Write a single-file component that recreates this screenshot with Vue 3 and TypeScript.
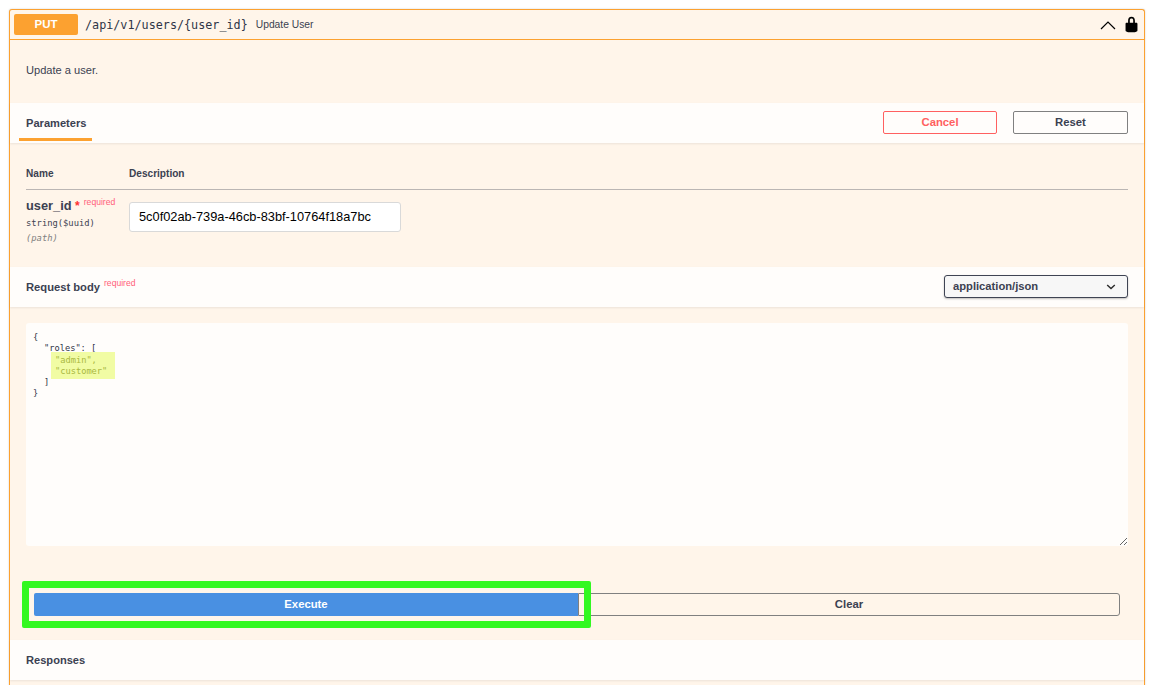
<script setup lang="ts">
const title: string = 'Update User'
</script>

<template>
  <div class="page">
    <section class="card">
      <header class="summary">
        <span class="method">PUT</span>
        <span class="path">/api/v1/users/{user_id}</span>
        <span class="title">{{ title }}</span>
        <svg class="arrow" width="16" height="10" viewBox="0 0 16 10"><polyline points="1,9 8,2 15,9" fill="none" stroke="#000" stroke-width="1.2" /></svg>
        <svg class="lock" width="17" height="17" viewBox="0 0 20 20"><path d="M15.8 8H14V5.6C14 2.703 12.665 1 10 1 7.334 1 6 2.703 6 5.6V8H4c-.553 0-1 .646-1 1.199V17c0 .549.428 1.139.951 1.307l1.197.387C5.672 18.861 6.55 19 7.1 19h5.8c.549 0 1.428-.139 1.951-.307l1.196-.387c.524-.167.953-.757.953-1.306V9.199C17 8.646 16.352 8 15.8 8zM12 8H8V5.199C8 3.754 8.797 3 10 3c1.203 0 2 .754 2 2.199V8z" /></svg>
      </header>

      <p class="description">Update a user.</p>

      <div class="band params-band">
        <div class="tab">Parameters</div>
        <div class="band-actions">
          <button class="btn cancel">Cancel</button>
          <button class="btn reset">Reset</button>
        </div>
      </div>

      <div class="params">
        <div class="params-head">
          <span class="col-name">Name</span>
          <span>Description</span>
        </div>
        <div class="param-row">
          <div class="col-name">
            <div class="param-name">user_id <span class="star">*</span><span class="req">required</span></div>
            <div class="param-type">string($uuid)</div>
            <div class="param-in">(path)</div>
          </div>
          <input class="param-input" value="5c0f02ab-739a-46cb-83bf-10764f18a7bc" />
        </div>
      </div>

      <div class="band body-band">
        <div class="body-title">Request body<span class="body-req">required</span></div>
        <div class="select">
          <span>application/json</span>
          <svg width="10" height="6" viewBox="0 0 10 6"><polyline points="1.2,1 5,4.6 8.8,1" fill="none" stroke="#2b2b2b" stroke-width="1.4" /></svg>
        </div>
      </div>

      <div class="editor-wrap">
        <div class="editor">
          <div class="ln">{</div>
          <div class="ln ind1">"roles": [</div>
          <div class="selected">
            <div class="ln">"admin",</div>
            <div class="ln">"customer"</div>
          </div>
          <div class="ln ind1">]</div>
          <div class="ln">}</div>
        </div>
      </div>

      <div class="execute-row">
        <div class="execute-slot">
          <button class="execute">Execute</button>
          <div class="highlight"></div>
        </div>
        <button class="clear">Clear</button>
      </div>

      <div class="band responses">Responses</div>
      <div class="rest"></div>
    </section>
  </div>
</template>

<style>
html, body { margin: 0; background: #fff; overflow: hidden; }
</style>

<style scoped>
.page {
  width: 1157px;
  height: 685px;
  overflow: hidden;
  padding: 9px 0 0 9px;
  box-sizing: border-box;
  font-family: "Liberation Sans", Arial, sans-serif;
  color: #3b4151;
}
.card {
  width: 1136px;
  box-sizing: border-box;
  border: 1px solid #fca130;
  border-bottom: 0;
  border-radius: 3px 3px 0 0;
  background: #fff5ea;
  box-shadow: 0 0 2px rgba(0, 0, 0, .2);
}
.summary {
  height: 30px;
  box-sizing: border-box;
  display: flex;
  align-items: center;
  padding: 0 4px;
  border-bottom: 1px solid #fca130;
}
.method {
  width: 64px;
  height: 21px;
  border-radius: 2px;
  background: #fca130;
  color: #fff;
  font-size: 11.5px;
  font-weight: 700;
  line-height: 21px;
  text-align: center;
}
.path {
  margin-left: 7px;
  font-family: "DejaVu Sans Mono", monospace;
  font-size: 11.75px;
  font-weight: 400;
  color: #2f3547;
}
.title { margin-left: 8px; font-size: 10.3px; }
.arrow { margin-left: auto; margin-right: 7px; }
.lock { margin-right: 0; }
.description {
  margin: 0;
  height: 63px;
  box-sizing: border-box;
  padding: 23px 16px 0;
  font-size: 11.1px;
  line-height: 14px;
}
.band {
  background: #fffdfb;
  box-shadow: 0 1px 2px rgba(0, 0, 0, .08);
  position: relative;
}
.params-band {
  height: 40px;
  display: flex;
  justify-content: space-between;
  padding: 0 16px 0 9px;
}
.tab {
  width: 73px;
  height: 38px;
  box-sizing: border-box;
  border-bottom: 3px solid #fca130;
  padding: 13px 0 0 7px;
  font-size: 11.1px;
  font-weight: 700;
  line-height: 14px;
}
.band-actions { display: flex; gap: 16px; padding-top: 8px; }
.btn {
  width: 114px;
  height: 23px;
  padding: 0 0 2px;
  box-sizing: border-box;
  border-radius: 2px;
  background: transparent;
  font: 700 11.3px "Liberation Sans", Arial, sans-serif;
  color: #3b4151;
}
.cancel { border: 1px solid #ff6060; color: #ff6060; }
.reset { width: 115px; border: 1px solid #808080; }
.params { height: 124px; padding: 0 16px; }
.params-head {
  height: 47px;
  box-sizing: border-box;
  display: flex;
  align-items: center;
  padding-top: 14px;
  border-bottom: 1px solid rgba(59, 65, 81, .35);
  font-size: 10.1px;
  font-weight: 700;
}
.col-name { width: 103px; flex: none; }
.param-row { display: flex; padding-top: 8px; }
.param-name { font-size: 12.8px; font-weight: 700; line-height: 16px; white-space: nowrap; }
.star { color: #ff3030; font-size: 12px; }
.req { color: #ff5f7a; font-size: 8.6px; position: relative; top: -5px; margin-left: 4px; font-weight: 400; }
.param-type { font-family: "DejaVu Sans Mono", monospace; font-size: 8.8px; font-weight: 400; line-height: 14px; margin-top: 1px; white-space: nowrap; }
.param-in { font-family: "DejaVu Sans Mono", monospace; font-size: 8.8px; font-style: italic; color: #808080; line-height: 14px; margin-top: 1px; }
.param-input {
  width: 272px;
  height: 30px;
  margin-top: 4px;
  box-sizing: border-box;
  padding: 0 9px 1px;
  border: 1px solid #d9d9d9;
  border-radius: 3px;
  background: #fff;
  color: #000;
  font: 400 12.8px "Liberation Sans", Arial, sans-serif;
  outline: none;
}
.body-band {
  height: 40px;
  display: flex;
  justify-content: space-between;
  align-items: center;
  padding: 0 16px;
}
.body-title { font-size: 11.2px; font-weight: 700; }
.body-req { color: #ff5f7a; font-size: 8.6px; font-weight: 400; position: relative; top: -5px; margin-left: 4px; }
.select {
  width: 184px;
  height: 23px;
  align-self: flex-start;
  margin-top: 8px;
  box-sizing: border-box;
  display: flex;
  justify-content: space-between;
  align-items: center;
  padding: 0 11px 0 8px;
  border: 1px solid #3f4453;
  border-radius: 3px;
  background: #f7f7f7;
  box-shadow: 0 1px 2px rgba(0, 0, 0, .25);
  font-size: 11.2px;
  font-weight: 700;
}
.select span { position: relative; top: -1px; }
.editor-wrap { padding: 16px 16px 0; height: 286px; box-sizing: border-box; }
.editor {
  width: 1102px;
  height: 223px;
  box-sizing: border-box;
  padding: 9px 7px;
  border-radius: 3px;
  background: #fffdfb;
  overflow: auto;
  resize: both;
  font-family: "DejaVu Sans Mono", monospace;
  font-size: 8.7px;
  font-weight: 400;
  line-height: 11px;
  white-space: pre;
  color: #2f3547;
}
.ind1 { padding-left: 11px; }
.selected {
  width: 64px;
  margin: -2px 0 -2.5px 18px;
  padding: 2.5px 0 2.5px 4px;
  box-sizing: border-box;
  background: #f1fca4;
  color: #a9b83f;
}
.execute-row { display: flex; height: 47px; padding: 0 24px; box-sizing: border-box; }
.execute-slot { position: relative; width: 544px; height: 23px; }
.execute {
  width: 544px;
  height: 23px;
  padding: 0 0 2px;
  border: 0;
  border-radius: 2px 0 0 2px;
  background: #4990e2;
  color: #fff;
  font: 700 11.3px "Liberation Sans", Arial, sans-serif;
}
.highlight {
  position: absolute;
  left: -12px;
  right: -13px;
  top: -12px;
  bottom: -12px;
  border: 7px solid #33f821;
  border-radius: 2px;
  pointer-events: none;
}
.clear {
  width: 542px;
  height: 23px;
  padding: 0 0 2px;
  box-sizing: border-box;
  border: 1px solid #808080;
  border-radius: 0 3px 3px 0;
  background: transparent;
  color: #3b4151;
  font: 700 11.3px "Liberation Sans", Arial, sans-serif;
}
.responses {
  height: 40px;
  box-sizing: border-box;
  padding: 13px 16px 0;
  font-size: 11.1px;
  font-weight: 700;
  line-height: 14px;
}
.rest { height: 10px; }
</style>
